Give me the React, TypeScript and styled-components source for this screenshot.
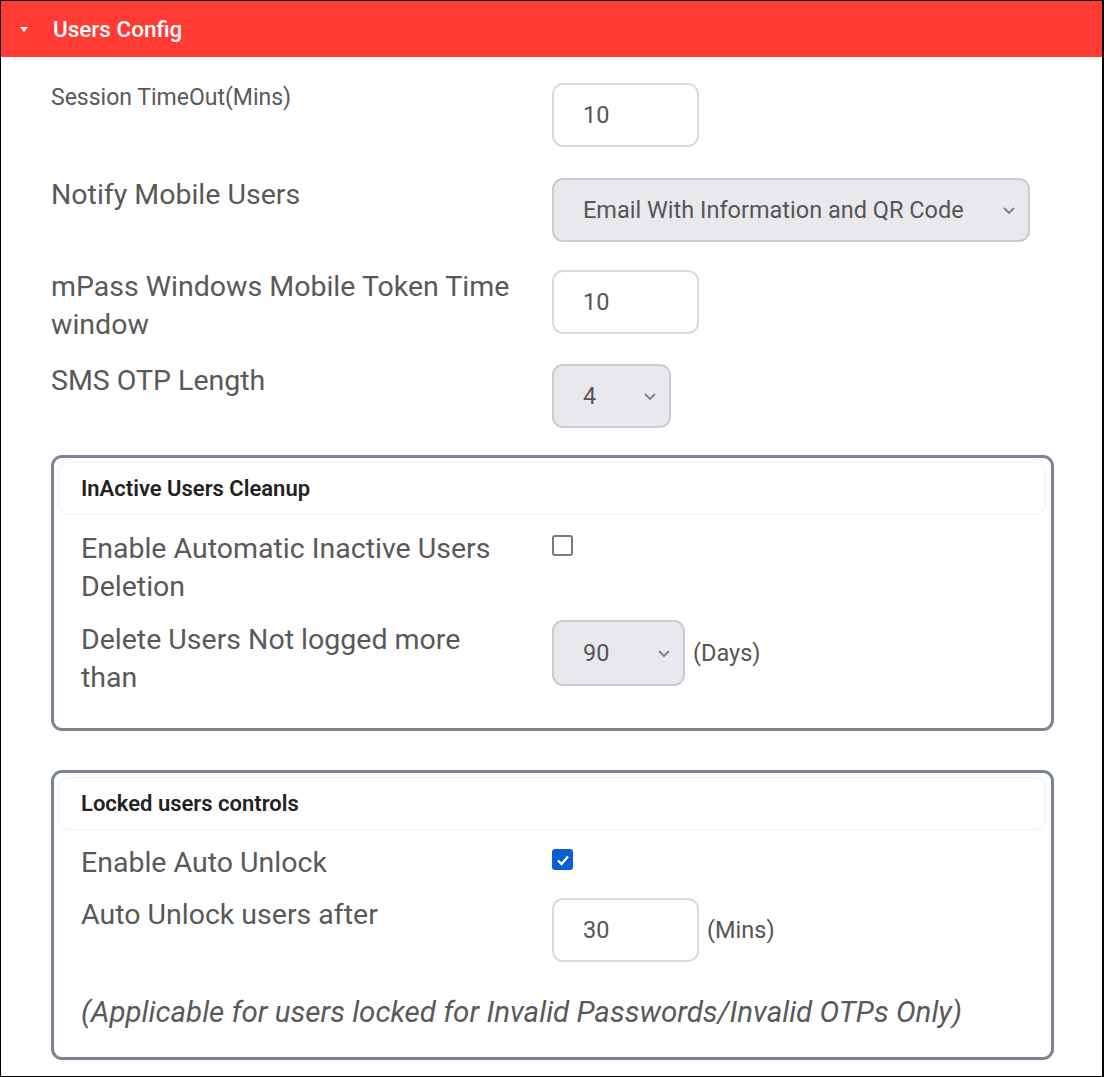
import React from "react";
import styled, { createGlobalStyle } from "styled-components";

const Global = createGlobalStyle`
  body {
    margin: 0;
    background: #ffffff;
    font-family: Roboto, "Liberation Sans", sans-serif;
  }
`;

const Frame = styled.div`
  box-sizing: border-box;
  width: 1104px;
  height: 1077px;
  border: 1px solid #000;
  border-right-width: 2px;
  overflow: hidden;
  background: #fff;
`;

const Header = styled.div`
  height: 56px;
  background: #ff3b33;
  display: flex;
  align-items: center;
  padding-left: 19px;
  gap: 25px;
  color: #fff;
  font-size: 22.5px;
  font-weight: 500;
`;

const Caret = styled.span`
  width: 0;
  height: 0;
  border-left: 4px solid transparent;
  border-right: 4px solid transparent;
  border-top: 5px solid #fff;
`;

const Body = styled.div`
  padding: 26px 0 0 50px;
  width: 1004px;
`;

const Row = styled.div<{ $top?: number; $col?: number }>`
  display: grid;
  grid-template-columns: ${(p) => p.$col || 501}px 1fr;
  align-items: start;
  margin-top: ${(p) => p.$top || 0}px;
`;

const Label = styled.div<{ $small?: boolean; $max?: number; $shift?: number }>`
  color: #595959;
  font-size: ${(p) => (p.$small ? 23 : 28.5)}px;
  line-height: ${(p) => (p.$small ? 30 : 38)}px;
  margin-top: ${(p) => (p.$small ? 0 : p.$shift ?? -2)}px;
  max-width: ${(p) => p.$max || 480}px;
`;

const Controls = styled.div`
  display: flex;
  align-items: center;
  gap: 8px;
`;

const TextBox = styled.div`
  box-sizing: border-box;
  width: 147px;
  height: 64px;
  border: 2px solid #d8dbe0;
  border-radius: 11px;
  background: #fff;
  display: flex;
  align-items: center;
  padding-left: 29px;
  color: #555;
  font-size: 23.5px;
`;

const SelectBox = styled.div<{ $w: number; $h?: number }>`
  box-sizing: border-box;
  width: ${(p) => p.$w}px;
  height: ${(p) => p.$h || 64}px;
  border: 2px solid #c9ccd2;
  border-radius: 11px;
  background: #e9e9ed;
  display: flex;
  align-items: center;
  justify-content: space-between;
  padding: 0 12px 0 29px;
  color: #555;
  font-size: 23.5px;
`;

const Unit = styled.span`
  color: #555;
  font-size: 23.5px;
`;

const Fieldset = styled.div<{ $top: number; $h: number }>`
  box-sizing: border-box;
  margin-top: ${(p) => p.$top}px;
  width: 1003px;
  height: ${(p) => p.$h}px;
  border: 3px solid #7b8591;
  border-radius: 11px;
  padding: 4px 5px 0 4px;
`;

const Legend = styled.div`
  box-sizing: border-box;
  height: 53px;
  border: 1px solid #f1f1f1;
  border-radius: 11px;
  display: flex;
  align-items: center;
  padding-left: 22px;
  color: #222;
  font-size: 22px;
  font-weight: 600;
`;

const Inner = styled.div`
  padding-left: 23px;
`;

const Check = styled.span<{ $on?: boolean }>`
  box-sizing: border-box;
  width: 21px;
  height: 21px;
  margin-top: 3px;
  border-radius: 3px;
  border: ${(p) => (p.$on ? "none" : "2px solid #7a7a7a")};
  background: ${(p) => (p.$on ? "#0b5ed7" : "#fff")};
  display: inline-flex;
  align-items: center;
  justify-content: center;
`;

const Note = styled.div`
  margin-top: 31px;
  color: #595959;
  font-size: 29.5px;
  font-style: italic;
  line-height: 38px;
`;

const Chevron = () => (
  <svg width="14" height="9" viewBox="0 0 14 9">
    <path d="M2 2l5 5 5-5" fill="none" stroke="#7a7f87" strokeWidth="1.8" />
  </svg>
);

const Tick = () => (
  <svg width="14" height="12" viewBox="0 0 14 12">
    <path d="M2 6.5l3.5 3.5L12 2.5" fill="none" stroke="#fff" strokeWidth="2.4" />
  </svg>
);

export default function App() {
  return (
    <Frame>
      <Global />
      <Header>
        <Caret />
        Users Config
      </Header>
      <Body>
        <Row>
          <Label $small>Session TimeOut(Mins)</Label>
          <Controls>
            <TextBox>10</TextBox>
          </Controls>
        </Row>
        <Row $top={31}>
          <Label>Notify Mobile Users</Label>
          <Controls>
            <SelectBox $w={478}>
              Email With Information and QR Code
              <Chevron />
            </SelectBox>
          </Controls>
        </Row>
        <Row $top={28}>
          <Label>mPass Windows Mobile Token Time window</Label>
          <Controls>
            <TextBox>10</TextBox>
          </Controls>
        </Row>
        <Row $top={20}>
          <Label>SMS OTP Length</Label>
          <Controls>
            <SelectBox $w={119}>
              4
              <Chevron />
            </SelectBox>
          </Controls>
        </Row>

        <Fieldset $top={27} $h={276}>
          <Legend>InActive Users Cleanup</Legend>
          <Inner>
            <Row $col={471} $top={17}>
              <Label $max={440}>Enable Automatic Inactive Users Deletion</Label>
              <Controls>
                <Check />
              </Controls>
            </Row>
            <Row $col={471} $top={14}>
              <Label $max={440} $shift={1}>Delete Users Not logged more than</Label>
              <Controls>
                <SelectBox $w={133} $h={66}>
                  90
                  <Chevron />
                </SelectBox>
                <Unit>(Days)</Unit>
              </Controls>
            </Row>
          </Inner>
        </Fieldset>

        <Fieldset $top={39} $h={290}>
          <Legend>Locked users controls</Legend>
          <Inner>
            <Row $col={471} $top={16}>
              <Label $max={440}>Enable Auto Unlock</Label>
              <Controls>
                <Check $on>
                  <Tick />
                </Check>
              </Controls>
            </Row>
            <Row $col={471} $top={16}>
              <Label $max={440}>Auto Unlock users after</Label>
              <Controls>
                <TextBox>30</TextBox>
                <Unit>(Mins)</Unit>
              </Controls>
            </Row>
            <Note>(Applicable for users locked for Invalid Passwords/Invalid OTPs Only)</Note>
          </Inner>
        </Fieldset>
      </Body>
    </Frame>
  );
}
